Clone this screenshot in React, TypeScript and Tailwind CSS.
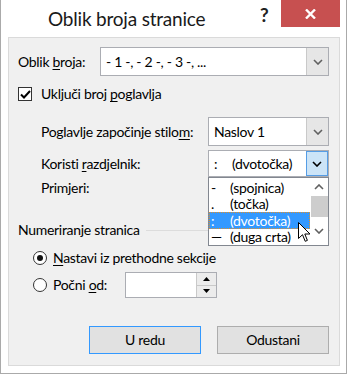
import React from "react";

const font = { fontFamily: 'Lato, "Noto Sans", sans-serif' };

const Chevron = ({ dir = "down", color = "#606060" }: { dir?: "down" | "up"; color?: string }) => (
  <svg width="10" height="6" viewBox="0 0 10 6">
    <polyline
      points={dir === "down" ? "1,1 5,5 9,1" : "1,5 5,1 9,5"}
      fill="none"
      stroke={color}
      strokeWidth="1.6"
    />
  </svg>
);

// combobox with drop button
const Select = ({
  children,
  className,
  active = false,
}: {
  children: React.ReactNode;
  className: string;
  active?: boolean;
}) => (
  <div className={`flex border border-[#abadb3] bg-white ${className}`}>
    <div className="flex-1 flex items-center pl-[5px] text-black whitespace-nowrap overflow-hidden">
      {children}
    </div>
    <div
      className={`w-[22px] flex items-center justify-center ${
        active ? "bg-[#cce4f7] border border-[#569de5]" : "bg-[#e6e6e6] border-l border-[#c9c9c9]"
      }`}
    >
      <Chevron color={active ? "#000" : "#606060"} />
    </div>
  </div>
);

const listItems = [
  { sym: "-", name: "(spojnica)" },
  { sym: ".", name: "(točka)" },
  { sym: ":", name: "(dvotočka)", sel: true },
  { sym: "—", name: "(duga crta)" },
];

export default function App() {
  return (
    <div className="w-[347px] h-[374px] bg-white border-l border-r border-b border-[#aaaaaa] flex flex-col" style={font}>
      {/* title bar */}
      <div className="h-[37px] flex items-start relative">
        <div className="pl-[47px] pt-[5px] text-[19px] tracking-[-0.2px] text-[#1a1a1a] leading-[28px] whitespace-nowrap">
          Oblik broja stranice
        </div>
        <div className="absolute left-[259px] top-[3px] text-[19px] font-bold text-[#222] leading-[24px]">?</div>
        <div className="absolute left-[280px] top-0 w-[59px] h-[27px] bg-[#c75050] flex items-center justify-center">
          <svg width="11" height="10" viewBox="0 0 11 10">
            <path d="M1 0.5 L10 9.5 M10 0.5 L1 9.5" stroke="#fff" strokeWidth="2.4" />
          </svg>
        </div>
      </div>

      {/* client area */}
      <div className="ml-[7px] mr-[6px] mb-[7px] flex-1 bg-[#f0f0f0] border border-[#dadada] relative flex flex-col text-[14px] tracking-[-0.3px] leading-[18px] text-black whitespace-nowrap">
        <div className="mt-[9px] h-[29px] flex items-center pl-[9px]">
          <span className="w-[82px]">
            Oblik <u className="underline-offset-2">b</u>roja:
          </span>
          <Select className="w-[229px] h-[29px]">- 1 -, - 2 -, - 3 -, ...</Select>
        </div>

        <div className="mt-[11px] h-[14px] flex items-center pl-[9px]">
          <div className="w-[14px] h-[14px] border border-[#333] bg-white flex items-center justify-center">
            <svg width="11" height="9" viewBox="0 0 11 9">
              <polyline points="1,4.5 4,7.5 10,1" fill="none" stroke="#000" strokeWidth="2" />
            </svg>
          </div>
          <span className="ml-[9px]">
            Uključi broj <u className="underline-offset-2">p</u>oglavlja
          </span>
        </div>

        <div className="mt-[16px] h-[29px] flex items-center pl-[32px]">
          <span className="w-[167px]">
            Poglavlje započinje stilo<u className="underline-offset-2">m</u>:
          </span>
          <Select className="w-[121px] h-[29px]">Naslov 1</Select>
        </div>

        <div className="mt-[4px] h-[27px] flex items-center pl-[32px]">
          <span className="w-[167px]">
            Koristi <u className="underline-offset-2">r</u>azdjelnik:
          </span>
          <Select className="w-[121px] h-[27px]" active>
            <span className="w-[18px]">:</span>
            <span>(dvotočka)</span>
          </Select>
        </div>

        <div className="mt-[1px] h-[20px] flex items-center pl-[32px]">Primjeri:</div>

        <div className="mt-[22px] h-[20px] flex items-center pl-[9px] pr-[9px]">
          <span>Numeriranje stranica</span>
          <div className="flex-1 h-px bg-[#dcdcdc] ml-[6px]" />
        </div>

        <div className="mt-[8px] h-[20px] flex items-center pl-[24px]">
          <div className="w-[14px] h-[14px] rounded-full border border-[#333] bg-white flex items-center justify-center">
            <div className="w-[6px] h-[6px] rounded-full bg-[#111]" />
          </div>
          <span className="ml-[6px]">
            <u className="underline-offset-2">N</u>astavi iz prethodne sekcije
          </span>
        </div>

        <div className="mt-[4px] h-[26px] flex items-center pl-[24px]">
          <div className="w-[14px] h-[14px] rounded-full border border-[#333] bg-white" />
          <span className="ml-[6px] w-[72px]">
            Počni <u className="underline-offset-2">o</u>d:
          </span>
          <div className="w-[92px] h-[26px] border border-[#abadb3] bg-white flex justify-end">
            <div className="w-[20px] flex flex-col border-l border-[#c9c9c9]">
              <div className="flex-1 bg-[#ececec] border-b border-[#c9c9c9] flex items-center justify-center">
                <svg width="7" height="4" viewBox="0 0 7 4">
                  <polygon points="0,4 3.5,0 7,4" fill="#000" />
                </svg>
              </div>
              <div className="flex-1 bg-[#ececec] flex items-center justify-center">
                <svg width="7" height="4" viewBox="0 0 7 4">
                  <polygon points="0,0 3.5,4 7,0" fill="#000" />
                </svg>
              </div>
            </div>
          </div>
        </div>

        <div className="mt-[28px] h-[28px] flex pl-[80px] gap-[16px]">
          <div className="w-[112px] h-[28px] bg-[#e1e1e1] border border-[#3399ff] flex items-center justify-center">U redu</div>
          <div className="w-[112px] h-[28px] bg-[#e1e1e1] border border-[#adadad] flex items-center justify-center">Odustani</div>
        </div>

        {/* open dropdown list */}
        <div className="absolute left-[199px] top-[139px] w-[121px] h-[69px] bg-white border border-[#828790] flex">
          <div className="flex-1 flex flex-col pt-px overflow-hidden">
            {listItems.map((it) => (
              <div
                key={it.name}
                className={`h-[16.5px] flex items-center pl-[2px] leading-[15px] ${
                  it.sel ? "bg-[#3399ff] text-white outline-1 outline-dotted outline-[#e0902a] -outline-offset-1" : ""
                }`}
              >
                <span className="w-[19px]">{it.sym}</span>
                <span>{it.name}</span>
              </div>
            ))}
          </div>
          <div className="w-[18px] flex flex-col items-center bg-white">
            <div className="h-[18px] flex items-center justify-center">
              <Chevron dir="up" />
            </div>
            <div className="w-[17px] h-[21px] bg-[#cdcdcd]" />
            <div className="flex-1 flex items-center justify-center">
              <Chevron />
            </div>
          </div>
        </div>

        {/* mouse pointer */}
        <svg className="absolute left-[289px] top-[184px]" width="13" height="21" viewBox="0 0 13 21">
          <path
            d="M0.5 0.5 L0.5 16.5 L4.5 12.7 L7.2 19.3 L9.4 18.4 L6.8 12 L12 12 Z"
            fill="#fff"
            stroke="#000"
            strokeWidth="1"
            strokeLinejoin="miter"
          />
        </svg>
      </div>
    </div>
  );
}
